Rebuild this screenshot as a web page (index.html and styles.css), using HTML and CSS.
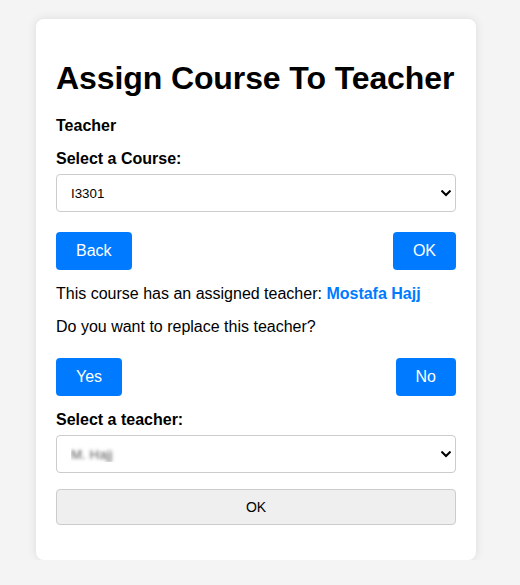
FILE: index.html
```html
<!DOCTYPE html>
<html lang="en">
<head>
<meta charset="utf-8">
<title>Assign Course To Teacher</title>
<link rel="stylesheet" href="styles.css">
</head>
<body>
<div class="page">
  <div class="card">
    <h1 class="title">Assign Course To Teacher</h1>
    <p class="role">Teacher</p>
    <label class="field-label" for="course">Select a Course:</label>
    <div class="select-wrap">
      <select id="course" class="field-select">
        <option>I3301</option>
      </select>
      <svg class="chevron" width="10" height="7" viewBox="0 0 10 7" aria-hidden="true"><path d="M1.2 1.3 L5 5 L8.8 1.3" fill="none" stroke="#000" stroke-width="2.1" stroke-linecap="square" stroke-linejoin="miter"/></svg>
    </div>
    <div class="btn-row">
      <button class="btn-primary" type="button">Back</button>
      <button class="btn-primary" type="button">OK</button>
    </div>
    <p class="info first">This course has an assigned teacher: <span class="teacher-name">Mostafa Hajj</span></p>
    <p class="info">Do you want to replace this teacher?</p>
    <div class="btn-row confirm">
      <button class="btn-primary" type="button">Yes</button>
      <button class="btn-primary" type="button">No</button>
    </div>
    <label class="field-label second" for="teacher">Select a teacher:</label>
    <div class="select-wrap">
      <select id="teacher" class="field-select blurred">
        <option>M. Hajj</option>
      </select>
      <svg class="chevron" width="10" height="7" viewBox="0 0 10 7" aria-hidden="true"><path d="M1.2 1.3 L5 5 L8.8 1.3" fill="none" stroke="#000" stroke-width="2.1" stroke-linecap="square" stroke-linejoin="miter"/></svg>
    </div>
    <button class="btn-submit" type="button">OK</button>
  </div>
</div>
</body>
</html>
```

FILE: styles.css
```css
* {
  box-sizing: border-box;
}

body {
  margin: 0;
  background: #f4f4f4;
  font-family: Arial, "Liberation Sans", sans-serif;
  color: #000;
}

.page {
  display: flex;
  justify-content: center;
  padding: 19px 8px 0 0;
}

.card {
  width: 440px;
  background: #fff;
  border-radius: 8px;
  padding: 20px;
  box-shadow: 0 0 10px rgba(0, 0, 0, 0.1);
}

.title {
  font-size: 32px;
  font-weight: bold;
  margin: 21px 0 20px;
  white-space: nowrap;
  letter-spacing: -0.1px;
}

.role {
  font-size: 16px;
  font-weight: bold;
  margin: 0 0 15px;
}

.field-label {
  display: block;
  font-size: 16px;
  font-weight: bold;
  margin-bottom: 6px;
}

.field-label.second {
  margin-top: 15px;
}

.select-wrap {
  position: relative;
}

.field-select {
  display: block;
  width: 100%;
  height: 38px;
  padding: 0 14px;
  border: 1px solid #ccc;
  border-radius: 4px;
  background: #fff;
  font-family: Arial, "Liberation Sans", sans-serif;
  font-size: 13.333px;
  color: #000;
  appearance: none;
  -webkit-appearance: none;
}

.chevron {
  position: absolute;
  right: 5px;
  top: 16px;
  pointer-events: none;
}

.blurred {
  color: transparent;
  text-shadow: 0 0 3.5px rgba(0, 0, 0, 0.65);
}

.btn-row {
  display: flex;
  justify-content: space-between;
  margin-top: 20px;
}

.btn-row.confirm {
  margin-top: 22px;
}

.btn-primary {
  height: 38px;
  padding: 0 20px;
  border: none;
  border-radius: 4px;
  background: #007bff;
  color: #fff;
  font-family: Arial, "Liberation Sans", sans-serif;
  font-size: 16px;
}

.info {
  font-size: 16px;
  margin: 15px 0 0;
}

.teacher-name {
  color: #007bff;
  font-weight: bold;
}

.btn-submit {
  display: block;
  width: 100%;
  height: 36px;
  margin: 16px 0 15px;
  border: 1px solid #ccc;
  border-radius: 4px;
  background: #efefef;
  color: #000;
  font-family: Arial, "Liberation Sans", sans-serif;
  font-size: 14px;
}
```
